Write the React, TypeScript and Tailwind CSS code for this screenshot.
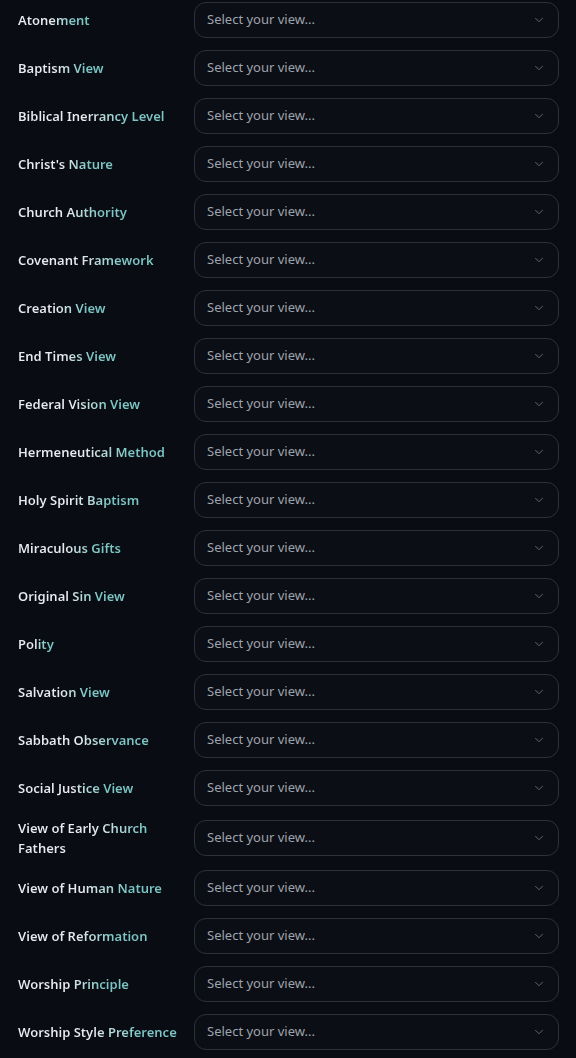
import React from "react";

const labels = [
  "Atonement",
  "Baptism View",
  "Biblical Inerrancy Level",
  "Christ's Nature",
  "Church Authority",
  "Covenant Framework",
  "Creation View",
  "End Times View",
  "Federal Vision View",
  "Hermeneutical Method",
  "Holy Spirit Baptism",
  "Miraculous Gifts",
  "Original Sin View",
  "Polity",
  "Salvation View",
  "Sabbath Observance",
  "Social Justice View",
  "View of Early Church Fathers",
  "View of Human Nature",
  "View of Reformation",
  "Worship Principle",
  "Worship Style Preference",
];

function Chevron() {
  return (
    <svg width="14" height="14" viewBox="0 0 24 24" fill="none" stroke="currentColor" strokeWidth="1.6" strokeLinecap="round" strokeLinejoin="round">
      <path d="m6 9 6 6 6-6" />
    </svg>
  );
}

export default function App() {
  return (
    <div className="min-h-[1058px] bg-[#090c12] pl-[18px] pr-[17px] pt-[2px]" style={{ fontFamily: '"Noto Sans", "Open Sans", sans-serif' }}>
      <div className="flex flex-col gap-3">
        {labels.map((l) => (
          <div key={l} className="flex items-center gap-3">
            <div className="w-[164px] shrink-0">
              <div className="w-fit bg-gradient-to-r from-[#e8eaee] from-45% to-[#7cc6c6] to-75% bg-clip-text text-[13px] font-semibold leading-5 text-transparent">
                {l}
              </div>
            </div>
            <button className="flex h-9 flex-1 items-center justify-between rounded-xl border border-[#2c313b] bg-[#0b0e15] pl-3 pr-3 text-left text-[13px] text-[#9ea3ab]">
              <span>Select your view...</span>
              <span className="text-[#646a74]">
                <Chevron />
              </span>
            </button>
          </div>
        ))}
      </div>
    </div>
  );
}
